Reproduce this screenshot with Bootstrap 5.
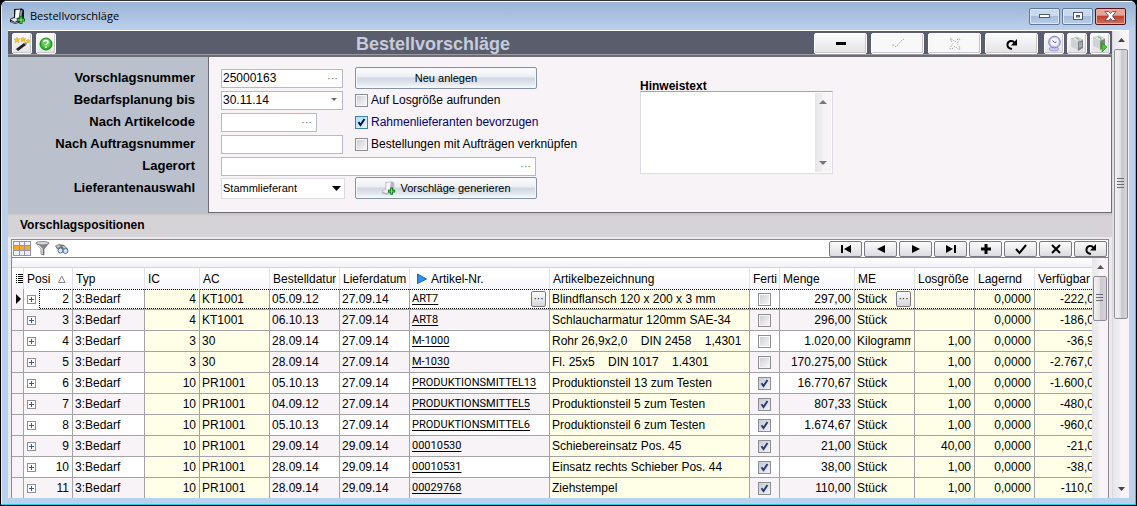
<!DOCTYPE html>
<html lang="de">
<head>
<meta charset="utf-8">
<meta name="viewport" content="width=device-width, initial-scale=1">
<title>Bestellvorschläge</title>
<link href="https://cdn.jsdelivr.net/npm/bootstrap@5.3.0/dist/css/bootstrap.min.css" rel="stylesheet">
<style>
:root{--frame:#bad1ee;--panel:#f7f3f7;--line:#a5a2a5;--soft:#ffffe7}
body{font-family:"Liberation Sans",Arial,sans-serif;font-size:12px;line-height:16px;color:#000;overflow:hidden;background:#000}
button,input,select,textarea{font-family:inherit;color:inherit}
svg{display:block}
.app-window{height:100vh;background:var(--frame);border:1px solid #000;border-top-color:#342f36;border-radius:7px 7px 0 0;overflow:hidden;box-shadow:inset 0 1px #fff,inset -1px -1px #1fd0e8,inset 1px 0 #e4eefa}
.title-bar{height:29px;padding:0 9px 0 7px;background:linear-gradient(#9cb4d5,#b9d1ec);border-top:1px solid #fff;margin:0 1px}
.title-text{font:11px/16px "Open Sans","Noto Sans",sans-serif}
.win-buttons{gap:2px}
.win-btn{width:31px;height:17px;padding:0;border:1px solid #5f789a;border-radius:2px;background:linear-gradient(#cadaee 0 45%,#a5bcda 50%,#b8cee9);box-shadow:inset 0 0 0 1px #dce8f6;display:flex;align-items:center;justify-content:center}
.win-btn.quit{border-color:#54131a;background:linear-gradient(#e6a598 0 40%,#c3402c 50%,#d2715a);box-shadow:inset 0 0 0 1px #e5b0a5}
.client{margin:0 7px 7px;min-height:0;border-top:1px solid #fff}
.client-main{min-width:0}
.head-bar{height:26px;background:#5a5d6b;border-bottom:2px solid #6d6c72;padding:1px 2px 0 4px;box-shadow:inset 0 -1px #9c9ba2}
.head-title{font-size:18px;line-height:22px;font-weight:bold;color:#c6cbde;margin:0 0 0 300px}
.tool-btn{height:21px;width:20px;padding:0;border:1px solid #fff;border-radius:2px;background:linear-gradient(#fafafb,#e4e2e6);box-shadow:inset -1px -1px #c9c6cd;display:flex;align-items:center;justify-content:center}
.tool-btn.wide{width:53px}
.tool-btn:disabled{background:#f8f8f9}
.small-tools{gap:3px;margin-left:6px}
.labels{width:200px;background:#bac0cc;padding:10px 13px 14px 0;font-size:13px;font-weight:bold}
.labels label{height:22px;line-height:21px;text-align:right}
.form-area{background:var(--panel);border:1px solid #6d6d75;border-top:0;padding:10px 12px 13px}
.form-grid{display:grid;grid-template-columns:122px 273px 193px;column-gap:12px;grid-auto-rows:22px;align-items:center}
.check-line{display:flex;align-items:center;gap:3px}
.check-line.preset{color:#00007b}
.span-two{grid-column:1/3;width:315px}
.hint{grid-column:3;grid-row:1/7;align-self:start;padding-top:14px}
.hint label{line-height:10px}
.field{height:19px;border:1px solid #b5bac6;background:#fff;display:flex;align-items:center}
.field.short{width:96px}
.field input{border:0;background:none;outline:0;padding:0 0 0 1px;font-size:12px;line-height:16px;flex:1;min-width:0}
.field button{border:0;background:none;padding:0 4px 0 0;color:#6b6b73;font-size:11px;line-height:12px}
.pick{height:21px;border:1px solid #dcdbe4;background:#fff url("data:image/svg+xml,%3Csvg xmlns='http://www.w3.org/2000/svg' width='9' height='5'%3E%3Cpath d='M0 0h9L4.500 5z'/%3E%3C/svg%3E") no-repeat right 3px center;appearance:none;font-size:11px;padding:0 0 0 1px;width:124px;border-radius:0}
.action{width:182px;height:22px;padding:0;border:1px solid #8494a5;border-radius:2px;font-size:11px;line-height:16px;background:linear-gradient(#fdfdfd 0,#eceef2 45%,#cfd7e2 50%,#dfe5ed 75%,#fafbfc);box-shadow:inset 0 0 0 1px #f4f7fb;display:flex;align-items:center;justify-content:center;gap:4px}
.tick{width:13px;height:13px;margin:0;appearance:none;border:1px solid #8c8e8f;background:linear-gradient(135deg,#cdd0d6,#f6f6f6) content-box #f4f4f4;padding:1px;flex:none;display:block}
.tick:checked{background:url("data:image/svg+xml,%3Csvg xmlns='http://www.w3.org/2000/svg' viewBox='0 0 11 11'%3E%3Cpath d='M2.500 5.200L4.500 8L8.500 2' fill='none' stroke='%23233a72' stroke-width='1.900'/%3E%3C/svg%3E") center/11px 11px no-repeat,linear-gradient(135deg,#c5cad6,#f0f2f6)}
.form-grid .tick:checked{border-color:#3c7fb1;background:url("data:image/svg+xml,%3Csvg xmlns='http://www.w3.org/2000/svg' viewBox='0 0 11 11'%3E%3Cpath d='M2.500 5.200L4.500 8L8.500 2' fill='none' stroke='%2300104a' stroke-width='2'/%3E%3C/svg%3E") center/11px 11px no-repeat,linear-gradient(135deg,#a9dcf8,#eaf8ff)}
.memo{height:83px;border:1px solid #dedbe6;border-top-color:#a5a3ad;background:#fff;padding:1px}
.memo textarea{border:0;resize:none;outline:0;flex:1;min-width:0;font-size:12px;padding:2px;overflow:hidden}
.scroller{width:16px;background:linear-gradient(90deg,#e7e5e9,#efeeef 40%,#f7f3f7 50%);display:flex;flex-direction:column;align-items:center;flex:none}
.scroller svg{flex:none}
.thumb{width:14px;border:1px solid #8e8c94;border-radius:2px;background:linear-gradient(90deg,#f3f3f5,#e3e3e6 45%,#c9c8ce 55%,#d6d5da);display:flex;align-items:center;justify-content:center}
.outer-scroll{width:17px;border-left:1px solid #dcd9df}
.outer-scroll .thumb{height:270px}
.grid-scroll .thumb{height:45px}
.section-head{background:linear-gradient(#bebdc1,#d6d3d6 3px);height:24px;padding:1px 0 0 12px;font-size:12px;line-height:23px;font-weight:bold}
.grid-wrap{background:#ebe9ec;padding:2px 3px 0 3px;min-height:0}
.grid-box{border:1px solid #8c8a91;border-bottom:0;background:#fff;min-height:0}
.grid-body{min-height:0}
.grid-view{min-width:0}
.grid-tools{height:18px;border-bottom:1px solid #84828a;padding:0 1px}
.nav-row{gap:2px}
.nav-btn{width:33px;height:16px;padding:0;border:1px solid #7b7982;border-radius:2px;background:linear-gradient(#fbfbfc,#dddbe0);display:flex;align-items:center;justify-content:center}
.flat{border:0;background:none;padding:0}
.band{height:10px;background:linear-gradient(#fff,#f1f1f8);border-bottom:1px solid #d3d2da}
.positions{table-layout:fixed;width:1106px;border-collapse:separate;border-spacing:0}
.positions th{font-weight:normal;height:21px;padding:0 3px 0 3px;background:linear-gradient(#fff 0 40%,#f4f5fb);border-right:1px solid #e2e1e8;white-space:nowrap;line-height:20px}
.positions td{height:21px;padding:0 3px 0 2px;border-right:1px solid var(--line);border-bottom:1px solid var(--line);line-height:20px;white-space:pre;background-color:#fff}
.positions tr:nth-child(even) td{background-color:var(--panel)}
.positions tbody td.soft{background-color:var(--soft)}
.positions td.mark-col,.positions tbody tr td.mark-col{background-color:var(--panel);padding:0}
.positions td.open-col{border-right:0;padding:0 0 0 3px}
.positions a{font:11px/18px Roboto,"Liberation Sans",sans-serif;color:#000;text-decoration:underline;text-underline-offset:2px}
.positions .active td:nth-child(n+3){background-image:repeating-linear-gradient(90deg,#000 0 1px,transparent 1px 2px),repeating-linear-gradient(90deg,#000 0 1px,transparent 1px 2px);background-size:100% 1px;background-position:top,bottom;background-repeat:no-repeat}
.positions .active td:nth-child(3){border-left:1px dotted #000}
.expand{width:9px;height:9px;border:1px solid #8c8e9c;background:linear-gradient(#3c5a94,#3c5a94) center/5px 1px no-repeat,linear-gradient(#3c5a94,#3c5a94) center/1px 5px no-repeat,#fff;padding:0;display:block}
.more{width:15px;height:16px;border:1px solid #7b7982;border-radius:2px;background:linear-gradient(#fbfbfc,#d8d6dc);padding:0;font-size:10px;line-height:10px;flex:none}
</style>
</head>
<body>
<div class="app-window d-flex flex-column">
  <header class="title-bar d-flex align-items-center flex-shrink-0">
    <svg width="17" height="17" viewBox="0 0 17 17"><path d="M5 1l8-.5L15 2v8l-2 4-7 2-5-2v-3l4-2z" fill="#15161a"/><path d="M6.500 2l4.500-.5L10 9.500l-4 1z" fill="#fafafc"/><path d="M1.500 11.500L5 10l5 1-4 3z" fill="#e6e9f0"/><path d="M2 13.500l4 1.500 3-1" fill="none" stroke="#9aa0ae"/><path d="M11.500 2l2 .5-1 6-2 1z" fill="#8c94a5"/><path d="M10.500 8h3v2.500H16v3h-2.500V16h-3v-2.500H8v-3h2.500z" fill="#0a7a12"/><path d="M11.500 9h1v2.500H15v1h-2.500V15h-1v-2.500H9v-1h2.500z" fill="#8bf06a"/></svg>
    <span class="title-text ms-1">Bestellvorschläge</span>
    <div class="win-buttons d-flex ms-auto">
      <button class="win-btn" aria-label="Minimieren"><svg width="13" height="6" viewBox="0 0 13 6"><rect x="1.500" y="1.500" width="10" height="3" fill="#fff" stroke="#4c5a73"/></svg></button>
      <button class="win-btn" aria-label="Maximieren"><svg width="12" height="10" viewBox="0 0 12 10"><rect x="1.500" y="1.500" width="9" height="7" fill="#fff" stroke="#4c5a73"/><rect x="4.500" y="4.500" width="3" height="1.500" fill="#8ba4c6" stroke="#4c5a73"/></svg></button>
      <button class="win-btn quit" aria-label="Schließen"><svg width="13" height="10" viewBox="0 0 13 10"><path d="M1 .5h3.500l2 2 2-2H12L8.500 5l3.500 4.500H8.500l-2-2-2 2H1L4.500 5z" fill="#fff" stroke="#56404a" stroke-width=".8"/></svg></button>
    </div>
  </header>

  <div class="client d-flex flex-grow-1">
    <main class="client-main d-flex flex-column flex-grow-1">
      <div class="head-bar d-flex align-items-center flex-shrink-0">
        <button class="tool-btn" aria-label="Assistent"><svg width="16" height="16" viewBox="0 0 16 16"><path d="M2 13L10 7l2 2-8 6z" fill="#222"/><path d="M10 7l2-1 1 2-1 1z" fill="#888"/><g fill="#f6c928" stroke="#c69a12" stroke-width=".4"><path d="M3 1l1 2 2 .2L4.500 4.500 5 7 3 5.500 1 7l.5-2.500L0 3.200 2 3zM9 1l1 1.500 2 .2-1.500 1L11 6 9 4.700 7 6l.5-2.300L6.500 2.700 8 2.500zM14 3l.7 1.300 1.300.2-1 1 .3 1.500-1.300-.8-1.300.8.3-1.500-1-1 1.300-.2z"/></g></svg></button>
        <button class="tool-btn ms-1" aria-label="Hilfe"><svg width="14" height="14" viewBox="0 0 14 14"><circle cx="7" cy="7" r="6" fill="#2eb52b" stroke="#168019"/><circle cx="7" cy="6" r="4.500" fill="#5ed04f"/><path d="M4.800 5.300C5 2.900 9.200 3 9 5.300 8.900 6.700 7 6.600 7 8.300M7 9.500V11" fill="none" stroke="#fff" stroke-width="1.600"/></svg></button>
        <h1 class="head-title">Bestellvorschläge</h1>
        <div class="d-flex gap-1 ms-auto">
          <button class="tool-btn wide" aria-label="Löschen"><svg width="12" height="4"><path d="M1 0h10v3H1z"/></svg></button>
          <button class="tool-btn wide" disabled aria-label="Speichern"><svg width="14" height="12" viewBox="0 0 14 12"><path d="M1 7h2l2 2 5-6 3-2" fill="none" stroke="#aaa" stroke-dasharray="2 1"/></svg></button>
          <button class="tool-btn wide" disabled aria-label="Abbrechen"><svg width="12" height="12" viewBox="0 0 12 12"><path d="M1 1l2 0 3 3 3-3h2L8 5.500 11 10v1H9L6 8l-3 3H1v-1l3-4.500z" fill="#fff" stroke="#aaa" stroke-dasharray="2 1"/></svg></button>
          <button class="tool-btn wide" aria-label="Aktualisieren"><svg width="12" height="12" viewBox="0 0 12 12"><path d="M6 11C2.500 10.500 1 8.500 1.500 6 2.200 2.500 6.500 1.800 8.500 4.800" fill="none" stroke="#000" stroke-width="2"/><path d="M11 1v6.500H5z"/></svg></button>
        </div>
        <div class="small-tools d-flex">
          <button class="tool-btn" aria-label="Zeit"><svg width="15" height="17" viewBox="0 0 15 17"><ellipse cx="7" cy="14" rx="5" ry="2" fill="#c5c7ee" stroke="#8a8cbb" stroke-width=".6"/><circle cx="7.500" cy="7" r="5.800" fill="#c0c5f2" stroke="#7f83bd"/><circle cx="7.500" cy="7" r="4" fill="#f4f5ff"/><path d="M7.500 7.500l-2-2M7.500 7.500l2-.5" stroke="#4a4e96"/></svg></button>
          <button class="tool-btn" aria-label="Paket"><svg width="16" height="16" viewBox="0 0 16 16"><path d="M2 3l6-2 6 3-5 2z" fill="#e5e7e6" stroke="#999" stroke-width=".5"/><path d="M2 3l7 3v8l-7-3z" fill="#d0d3d3"/><path d="M9 6l5-2v8l-5 3z" fill="#7d8080"/><path d="M10 7l3-1v5l-3 1z" fill="#a6a9a9"/><path d="M7 2l3 1.500v2" stroke="#79b39a" fill="none"/></svg></button>
          <button class="tool-btn" aria-label="Paket starten"><svg width="16" height="17" viewBox="0 0 16 17"><path d="M1 3l6-2 6 3-5 2z" fill="#e5e7e6" stroke="#999" stroke-width=".5"/><path d="M1 3l7 3v8l-7-3z" fill="#d0d3d3"/><path d="M8 6l5-2v8l-5 3z" fill="#7d8080"/><path d="M6 2l3 1.500v2" stroke="#4fb35f" fill="none"/><path d="M10 8l5 4-5 5z" fill="#46cf32" stroke="#178c14" stroke-width=".7"/></svg></button>
        </div>
      </div>

      <form class="d-flex flex-shrink-0 mb-0" onsubmit="return false">
        <div class="labels d-flex flex-column flex-shrink-0">
          <label for="nr">Vorschlagsnummer</label>
          <label for="bis">Bedarfsplanung bis</label>
          <label for="code">Nach Artikelcode</label>
          <label for="auftrag">Nach Auftragsnummer</label>
          <label for="lager">Lagerort</label>
          <label for="lieferant">Lieferantenauswahl</label>
        </div>
        <div class="form-area flex-grow-1">
          <div class="form-grid">
            <div class="field"><input id="nr" value="25000163"><button type="button" aria-label="Nummer wählen">···</button></div>
            <button type="button" class="action">Neu anlegen</button>
            <div class="field"><input id="bis" value="30.11.14"><button type="button" aria-label="Datum wählen"><svg width="7" height="4"><path d="M0 0h6L3 3z" fill="#6b6b73"/></svg></button></div>
            <label class="check-line"><input type="checkbox" class="tick">Auf Losgröße aufrunden</label>
            <div class="field short"><input id="code"><button type="button" aria-label="Artikel wählen">···</button></div>
            <label class="check-line preset"><input type="checkbox" class="tick" checked>Rahmenlieferanten bevorzugen</label>
            <div class="field"><input id="auftrag"></div>
            <label class="check-line"><input type="checkbox" class="tick">Bestellungen mit Aufträgen verknüpfen</label>
            <div class="field span-two"><input id="lager"><button type="button" aria-label="Lagerort wählen">···</button></div>
            <select id="lieferant" class="pick"><option>Stammlieferant</option></select>
            <button type="button" class="action"><svg width="15" height="15" viewBox="0 0 17 17"><path d="M5 1l8-.5L15 2v8l-2 4-7 2-5-2v-3l4-2z" fill="#b4b6c4"/><path d="M6 2l5-.5-1 8-4 1z" fill="#f8f8fb"/><path d="M1.500 11.500L5 10l5 1-4 3z" fill="#eceef4"/><path d="M10.500 7.500h3v2.500H16v3h-2.500v2.500h-3V13H8v-3h2.500z" fill="#0a7a12"/><path d="M11.500 8.500h1V11H15v1h-2.500v2.500h-1V12H9v-1h2.500z" fill="#8bf06a"/></svg>Vorschläge generieren</button>
            <div class="hint d-flex flex-column">
              <label for="hinweis" class="fw-bold">Hinweistext</label>
              <div class="memo d-flex">
                <textarea id="hinweis"></textarea>
                <div class="scroller justify-content-between py-1" aria-hidden="true"><svg width="8" height="10"><path d="M0 7h8L4 3z" fill="#77757d"/></svg><svg width="8" height="10"><path d="M0 3h8L4 7z" fill="#77757d"/></svg></div>
              </div>
            </div>
          </div>
        </div>
      </form>

      <h2 class="section-head mb-0 flex-shrink-0">Vorschlagspositionen</h2>
      <section class="grid-wrap d-flex flex-column flex-grow-1">
        <div class="grid-box d-flex flex-column flex-grow-1">
          <div class="grid-tools d-flex align-items-center flex-shrink-0">
            <button class="flat me-1" aria-label="Spalten"><svg width="18" height="15" viewBox="0 0 18 15"><rect width="18" height="15" fill="#8f93ae"/><path d="M1 1h5v3H1zM7 1h4v3H7zM12 1h5v3h-5zM1 10h5v4H1zM7 10h4v4H7zM12 10h5v4h-5z" fill="#f1f1fa"/><path d="M1 5h5v4H1zM7 5h4v4H7zM12 5h5v4h-5z" fill="#f6a72c"/></svg></button>
            <button class="flat me-1" aria-label="Filter"><svg width="15" height="15" viewBox="0 0 15 15"><path d="M1 2l5 6v5l3 1V8l5-6z" fill="#85868a" stroke="#55565a" stroke-width=".6"/><path d="M3 4l4 4v5" fill="none" stroke="#e8e8ea" stroke-width="1.300"/><ellipse cx="7.500" cy="2.200" rx="6.500" ry="1.700" fill="#d7d7da" stroke="#66676b" stroke-width=".7"/></svg></button>
            <button class="flat" aria-label="Suchen"><svg width="15" height="12" viewBox="0 0 15 12"><path d="M1 3l4-2 5 1 4 4-2 4-4-1-5-3z" fill="#6f747c"/><path d="M2 3l3-1 2 1-3 2zM8 3l2 0 2 2-2 1z" fill="#c2c6cc"/><circle cx="6.500" cy="7.500" r="2.500" fill="#d1e8fa" stroke="#566f8c"/><circle cx="11.500" cy="8" r="2.500" fill="#d1e8fa" stroke="#566f8c"/></svg></button>
            <div class="nav-row d-flex ms-auto" id="navButtons"></div>
          </div>
          <div class="grid-body d-flex flex-grow-1">
            <div class="grid-view flex-grow-1 overflow-hidden">
              <div class="band"></div>
              <table class="positions">
                <colgroup id="cols"></colgroup>
                <thead><tr>
                  <th class="p-0"><svg class="ms-1" width="7" height="9"><path d="M0 0h1v1H0zM2 0h5v1H2zM0 2h1v1H0zM2 2h5v1H2zM0 4h1v1H0zM2 4h5v1H2zM0 6h1v1H0zM2 6h5v1H2zM0 8h1v1H0zM2 8h5v1H2z"/></svg></th>
                  <th colspan="2"><span class="d-flex align-items-center">Posi<svg class="ms-2" width="8" height="8"><path d="M.5 7.500h6.500L3.800 1z" fill="none" stroke="#8c8a94"/></svg></span></th>
                  <th>Typ</th><th>IC</th><th>AC</th>
                  <th><span class="d-block overflow-hidden">Bestelldatum</span></th>
                  <th><span class="d-block overflow-hidden">Lieferdatum</span></th>
                  <th><span class="d-flex align-items-center"><svg class="mx-1" width="10" height="12"><path d="M.5 1v9.500L9.500 6z" fill="#2e8fee" stroke="#1767c0"/></svg>Artikel-Nr.</span></th>
                  <th>Artikelbezeichnung</th>
                  <th class="pe-0"><span class="d-block overflow-hidden">Ferti</span></th>
                  <th>Menge</th><th>ME</th><th><span class="d-block overflow-hidden">Losgröße</span></th><th>Lagernd</th><th>Verfügbar</th>
                </tr></thead>
                <tbody id="rows"></tbody>
              </table>
            </div>
            <div class="scroller grid-scroll" aria-hidden="true">
              <svg width="8" height="18"><path d="M1 11h7L4.500 7z" fill="#55535b"/></svg>
              <div class="thumb"><svg width="8" height="9"><path d="M0 .5h7M0 3.500h7M0 6.500h7" stroke="#6c6a72"/></svg></div>
            </div>
          </div>
        </div>
      </section>
    </main>
    <div class="scroller outer-scroll" aria-hidden="true">
      <svg width="8" height="18"><path d="M1 11h7L4.500 7z" fill="#44424a"/></svg>
      <div class="thumb"><svg width="8" height="12"><path d="M0 .5h7M0 3.500h7M0 6.500h7M0 9.500h7" stroke="#6c6a72"/></svg></div>
      <svg class="mt-auto" width="8" height="18"><path d="M1 7h7l-3.500 4z" fill="#44424a"/></svg>
    </div>
  </div>
</div>
<script src="https://cdn.jsdelivr.net/npm/bootstrap@5.3.0/dist/js/bootstrap.bundle.min.js"></script>
<script>
const widths = [12, 15, 34, 72, 55, 70, 70, 70, 140, 200, 30, 75, 60, 60, 60, 83];
document.getElementById('cols').innerHTML = widths.map(w => `<col style="width:${w}px">`).join('');

const nav = [
  ['Erster', '<path d="M1 2h2v8H1zM11 2v8L4 6z"/>'],
  ['Zurück', '<path d="M10 2v8L2 6z"/>'],
  ['Weiter', '<path d="M2 2v8l8-4z"/>'],
  ['Letzter', '<path d="M9 2h2v8H9zM1 2v8l7-4z"/>'],
  ['Neu', '<path d="M4.500 1h3v3.500H11v3H7.500V11h-3V7.500H1v-3h3.500z"/>'],
  ['Übernehmen', '<path d="M1 6l3.500 4L11 2" fill="none" stroke="#000" stroke-width="2"/>'],
  ['Verwerfen', '<path d="M2 2l8 8M10 2l-8 8" stroke="#000" stroke-width="2"/>'],
  ['Aktualisieren', '<path d="M6 11C2.500 10.500 1 8.500 1.500 6 2.200 2.500 6.500 1.800 8.500 4.800" fill="none" stroke="#000" stroke-width="2"/><path d="M11 1v6.500H5z"/>']
];
document.getElementById('navButtons').innerHTML = nav.map(([name, icon]) =>
  `<button class="nav-btn" aria-label="${name}"><svg width="12" height="12" viewBox="0 0 12 12">${icon}</svg></button>`).join('');

const data = [
  [2, 4, 'KT1001', '05.09.12', '27.09.14', 'ART7', 'Blindflansch 120 x 200 x 3 mm', 0, '297,00', 'Stück', '', '-222,0000'],
  [3, 4, 'KT1001', '06.10.13', '27.09.14', 'ART8', 'Schlaucharmatur 120mm SAE-34', 0, '296,00', 'Stück', '', '-186,0000'],
  [4, 3, '30', '28.09.14', '27.09.14', 'M-1000', 'Rohr 26,9x2,0    DIN 2458    1,4301', 0, '1.020,00', 'Kilogramm', '1,00', '-36,9000'],
  [5, 3, '30', '28.09.14', '27.09.14', 'M-1030', 'Fl. 25x5    DIN 1017    1.4301', 0, '170.275,00', 'Stück', '1,00', '-2.767,0000'],
  [6, 10, 'PR1001', '05.10.13', '27.09.14', 'PRODUKTIONSMITTEL13', 'Produktionsteil 13 zum Testen', 1, '16.770,67', 'Stück', '1,00', '-1.600,0000'],
  [7, 10, 'PR1001', '04.09.12', '27.09.14', 'PRODUKTIONSMITTEL5', 'Produktionsteil 5 zum Testen', 1, '807,33', 'Stück', '1,00', '-480,0000'],
  [8, 10, 'PR1001', '05.10.13', '27.09.14', 'PRODUKTIONSMITTEL6', 'Produktionsteil 6 zum Testen', 1, '1.674,67', 'Stück', '1,00', '-960,0000'],
  [9, 10, 'PR1001', '29.09.14', '29.09.14', '00010530', 'Schiebereinsatz Pos. 45', 1, '21,00', 'Stück', '40,00', '-21,0000'],
  [10, 10, 'PR1001', '28.09.14', '29.09.14', '00010531', 'Einsatz rechts Schieber Pos. 44', 1, '38,00', 'Stück', '1,00', '-38,0000'],
  [11, 10, 'PR1001', '28.09.14', '29.09.14', '00029768', 'Ziehstempel', 1, '110,00', 'Stück', '1,00', '-110,0000']
];
const more = '<button class="more" aria-label="Auswählen">···</button>';
document.getElementById('rows').innerHTML = data.map(([pos, ic, ac, order, delivery, art, text, done, qty, unit, lot, avail], i) => `
<tr class="${i ? '' : 'active'}"><td class="mark-col">${i ? '' : '<svg class="ms-1" width="6" height="10"><path d="M0 0v10l5-5z"/></svg>'}</td><td class="open-col"><button class="expand" aria-label="Aufklappen"></button></td><td class="text-end">${pos}</td><td>3:Bedarf</td><td class="soft text-end">${ic}</td><td class="soft">${ac}</td><td>${order}</td><td>${delivery}</td><td><span class="d-flex align-items-center justify-content-between"><a href="#">${art}</a>${i ? '' : more}</span></td><td class="soft">${text}</td><td><input type="checkbox" class="tick mx-auto" aria-label="Fertig" ${done ? 'checked' : ''}></td><td class="text-end">${qty}</td><td class="soft"><span class="d-flex align-items-center justify-content-between overflow-hidden">${unit}${i ? '' : more}</span></td><td class="soft text-end">${lot}</td><td class="soft text-end">0,0000</td><td class="soft text-end">${avail}</td></tr>`).join('');
</script>
</body>
</html>
